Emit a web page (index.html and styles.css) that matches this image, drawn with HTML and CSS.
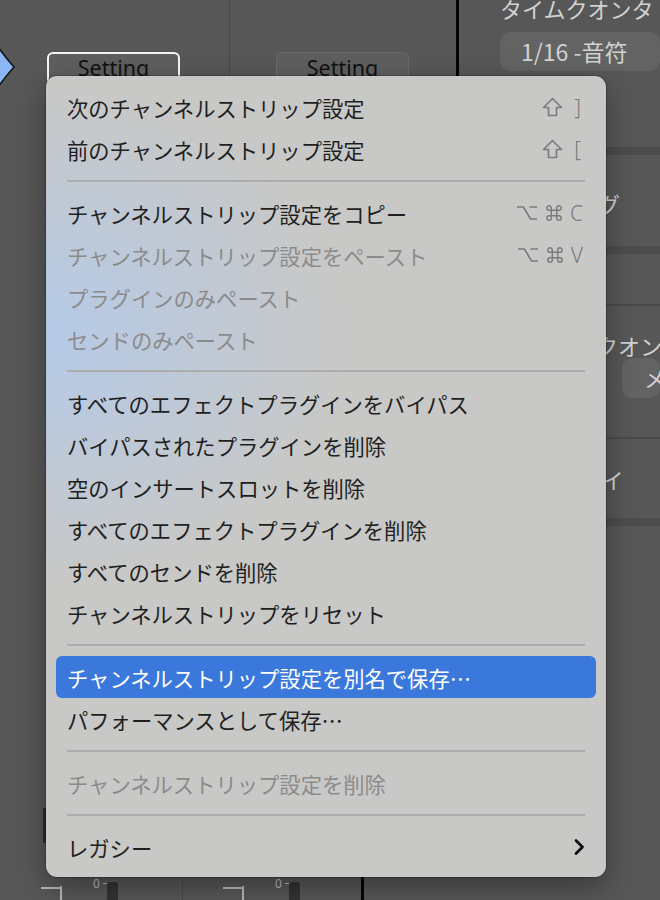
FILE: index.html
```html
<!DOCTYPE html>
<html>
<head>
  <title>Channel Strip Menu</title>
  <link rel="stylesheet" href="styles.css">
</head>
<body>
  <div class="desk">
    <div class="strips">
      <div class="strip strip-a">
        <div class="preset-btn is-active">Setting</div>
        <div class="fader-cap"></div>
      </div>
      <div class="strip strip-b">
        <div class="preset-btn">Setting</div>
      </div>
      <div class="rule-black"></div>
      <div class="inspector">
        <div class="insp-title">タイムクオンタ</div>
        <div class="insp-pill">1/16 -音符</div>
        <div class="insp-band band-1"></div>
        <div class="insp-label lbl-swing">スウィング</div>
        <div class="insp-band band-2"></div>
        <div class="insp-line line-1"></div>
        <div class="insp-label lbl-quant">クオン</div>
        <div class="insp-pill pill-small">メ</div>
        <div class="insp-line line-2"></div>
        <div class="insp-label lbl-delay">ディレイ</div>
        <div class="insp-band band-3"></div>
      </div>
    </div>

    <div class="meters">
      <div class="meter meter-a">
        <span class="tick-h"></span><span class="tick-v"></span>
        <span class="zero">0</span><span class="tick-s"></span><span class="knob"></span>
      </div>
      <div class="meter meter-b">
        <span class="tick-h"></span><span class="tick-v"></span>
        <span class="zero">0</span><span class="tick-s"></span><span class="knob"></span>
      </div>
      <div class="rule-black"></div>
      <div class="meter meter-c"></div>
    </div>
  </div>

  <!-- selection marker on the left edge -->
  <svg class="marker" width="16" height="50" viewBox="0 0 16 50">
    <path d="M-4 1 Q5 14 14 24 Q5 34 -4 47 Z" fill="#8ab6f6" stroke="#151515" stroke-width="1.6"/>
  </svg>

  <div class="menu">
    <div class="item">
      <span>次のチャンネルストリップ設定</span>
      <span class="keys">
        <svg class="shift" width="21" height="20" viewBox="0 0 21 20"><path d="M10.5 1.5 L19.5 10.5 L14.5 10.5 L14.5 18.5 L6.5 18.5 L6.5 10.5 L1.5 10.5 Z" fill="none" stroke="#7b7b7b" stroke-width="1.6" stroke-linejoin="round"/></svg>
        <span class="key-char bracket">]</span>
      </span>
    </div>
    <div class="item">
      <span>前のチャンネルストリップ設定</span>
      <span class="keys">
        <svg class="shift" width="21" height="20" viewBox="0 0 21 20"><path d="M10.5 1.5 L19.5 10.5 L14.5 10.5 L14.5 18.5 L6.5 18.5 L6.5 10.5 L1.5 10.5 Z" fill="none" stroke="#7b7b7b" stroke-width="1.6" stroke-linejoin="round"/></svg>
        <span class="key-char bracket">[</span>
      </span>
    </div>
    <div class="sep"></div>
    <div class="item">
      <span>チャンネルストリップ設定をコピー</span>
      <span class="keys">
        <svg class="opt" width="22" height="16" viewBox="0 0 22 16"><path d="M1 2 H7.5 L14.5 14 H21 M13.5 2 H21" fill="none" stroke="#7b7b7b" stroke-width="1.7"/></svg>
        <svg class="cmd" width="20" height="18" viewBox="0 0 20 20"><path d="M7 7 H13 V13 H7 Z M7 7 V4.5 A2.5 2.5 0 1 0 4.5 7 H7 M13 7 V4.5 A2.5 2.5 0 1 1 15.5 7 H13 M13 13 V15.5 A2.5 2.5 0 1 0 15.5 13 H13 M7 13 V15.5 A2.5 2.5 0 1 1 4.5 13 H7" fill="none" stroke="#7b7b7b" stroke-width="1.6"/></svg>
        <span class="key-char">C</span>
      </span>
    </div>
    <div class="item disabled">
      <span>チャンネルストリップ設定をペースト</span>
      <span class="keys">
        <svg class="opt" width="22" height="16" viewBox="0 0 22 16"><path d="M1 2 H7.5 L14.5 14 H21 M13.5 2 H21" fill="none" stroke="#7b7b7b" stroke-width="1.7"/></svg>
        <svg class="cmd" width="20" height="18" viewBox="0 0 20 20"><path d="M7 7 H13 V13 H7 Z M7 7 V4.5 A2.5 2.5 0 1 0 4.5 7 H7 M13 7 V4.5 A2.5 2.5 0 1 1 15.5 7 H13 M13 13 V15.5 A2.5 2.5 0 1 0 15.5 13 H13 M7 13 V15.5 A2.5 2.5 0 1 1 4.5 13 H7" fill="none" stroke="#7b7b7b" stroke-width="1.6"/></svg>
        <span class="key-char">V</span>
      </span>
    </div>
    <div class="item disabled"><span>プラグインのみペースト</span></div>
    <div class="item disabled"><span>センドのみペースト</span></div>
    <div class="sep"></div>
    <div class="item"><span>すべてのエフェクトプラグインをバイパス</span></div>
    <div class="item"><span>バイパスされたプラグインを削除</span></div>
    <div class="item"><span>空のインサートスロットを削除</span></div>
    <div class="item"><span>すべてのエフェクトプラグインを削除</span></div>
    <div class="item"><span>すべてのセンドを削除</span></div>
    <div class="item"><span>チャンネルストリップをリセット</span></div>
    <div class="sep"></div>
    <div class="item selected"><span>チャンネルストリップ設定を別名で保存…</span></div>
    <div class="item"><span>パフォーマンスとして保存…</span></div>
    <div class="sep"></div>
    <div class="item disabled"><span>チャンネルストリップ設定を削除</span></div>
    <div class="sep"></div>
    <div class="item">
      <span>レガシー</span>
      <svg class="chevron" width="12" height="18" viewBox="0 0 12 18"><path d="M3 2.5 L9.5 9 L3 15.5" fill="none" stroke="#111" stroke-width="2.8" stroke-linecap="round" stroke-linejoin="round"/></svg>
    </div>
  </div>
</body>
</html>
```

FILE: styles.css
```css
body {
  margin: 0;
  width: 660px;
  height: 900px;
  overflow: hidden;
  position: relative;
  background-color: #575757;
  font-family: "Noto Sans CJK JP", "Noto Sans", sans-serif;
}

.desk {
  display: flex;
  flex-direction: column;
  height: 900px;
}

.strips {
  display: flex;
  height: 877px;
}

.strip {
  display: flex;
  flex-direction: column;
  align-items: flex-start;
  box-sizing: border-box;
}

.strip-a {
  width: 230px;
  padding: 52px 0 34px 47px;
  border-right: 1px solid #484848;
}

.strip-b {
  width: 226px;
  padding: 52px 0 0 46px;
}

.preset-btn {
  width: 133px;
  height: 34px;
  box-sizing: border-box;
  border: 1px solid #6a6a6a;
  border-radius: 6px;
  background-color: #5e5e5e;
  color: #111;
  font-family: "Noto Sans", sans-serif;
  font-size: 21.5px;
  line-height: 30px;
  text-align: center;
}

.preset-btn.is-active {
  border: 2px solid #f4f4f4;
  line-height: 28px;
}

.fader-cap {
  margin-top: auto;
  margin-left: -4px;
  width: 3px;
  height: 35px;
  border-radius: 1px;
  background-color: #2c2c2c;
}

.rule-black {
  width: 3px;
  background-color: #050505;
}

.inspector {
  flex: 1;
  display: flex;
  flex-direction: column;
  color: #d2d2d2;
  font-size: 22px;
  white-space: nowrap;
  overflow: hidden;
}

.insp-title {
  margin: -7px 0 0 41px;
  line-height: 30px;
}

.insp-pill {
  margin: 9px 0 0 41px;
  height: 39px;
  padding-left: 21px;
  border-radius: 10px;
  background-color: #636363;
  font-size: 23px;
  line-height: 38px;
}

.insp-band {
  height: 8px;
  background-color: #4c4c4c;
}

.band-1 { margin-top: 76px; }
.band-2 { margin-top: 28px; }
.band-3 { margin-top: 24px; }

.insp-line {
  height: 2px;
  background-color: #4a4a4a;
}

.line-1 { margin-top: 50px; }
.line-2 { margin-top: 39px; }

.insp-label {
  line-height: 30px;
}

.lbl-swing { margin: 33px 0 0 51px; }
.lbl-quant { margin: 24px 0 0 137px; }
.lbl-delay { margin: 25px 0 0 78px; }

.insp-pill.pill-small {
  margin: -2px 0 0 163px;
  height: 40px;
  padding-left: 22px;
  font-size: 22px;
}

.meters {
  display: flex;
  height: 23px;
}

.meter {
  display: flex;
  align-items: flex-start;
  box-sizing: border-box;
  color: #bdbdbd;
}

.meter-a {
  width: 183px;
  padding-left: 41px;
  border-right: 1px solid #484848;
}

.meter-b {
  width: 178px;
  padding-left: 40px;
}

.meter-c {
  flex: 1;
}

.tick-h {
  width: 19px;
  height: 2px;
  margin-top: 10px;
  background-color: #b8b8b8;
}

.tick-v {
  width: 2px;
  height: 14px;
  margin-top: 9px;
  background-color: #b8b8b8;
}

.zero {
  margin-left: 31px;
  font-family: "Noto Sans", sans-serif;
  font-size: 12px;
  line-height: 14px;
}

.tick-s {
  width: 4px;
  height: 1px;
  margin: 6px 0 0 3px;
  background-color: #b8b8b8;
}

.knob {
  width: 11px;
  height: 20px;
  margin-top: 5px;
  border-radius: 3px 3px 0 0;
  background-color: #333;
}

.marker {
  position: absolute;
  left: 0;
  top: 43px;
}

/* context menu */
.menu {
  position: absolute;
  left: 46px;
  top: 76px;
  width: 560px;
  box-sizing: border-box;
  padding: 10px 10px 9px;
  border-radius: 11px;
  background-color: #c8c8c6;
  background-image: radial-gradient(ellipse 300px 250px at 0px 260px, rgba(176, 202, 240, 0.8), rgba(176, 202, 240, 0) 100%);
  box-shadow: 0 0 0 1px rgba(0, 0, 0, 0.22), 0 10px 28px rgba(0, 0, 0, 0.35);
}

.item {
  display: flex;
  justify-content: space-between;
  align-items: center;
  height: 42px;
  padding: 0 13px 0 11px;
  border-radius: 6px;
  color: #1f1f1f;
  font-size: 21.3px;
  white-space: nowrap;
}

.item.disabled {
  color: #8b8b8b;
}

.item.selected {
  background-color: #3a78dc;
  color: #fff;
}

.sep {
  height: 2px;
  margin: 10px 11px;
  background-color: #adadad;
}

.keys {
  display: flex;
  align-items: center;
  gap: 6px;
  color: #7b7b7b;
  line-height: 1;
}

.key-char {
  font-family: "Noto Sans", sans-serif;
  font-size: 21px;
  font-weight: 300;
}

.key-char.bracket {
  margin-left: 5px;
  margin-right: 2px;
}

.chevron {
  margin-right: -2px;
}
```
